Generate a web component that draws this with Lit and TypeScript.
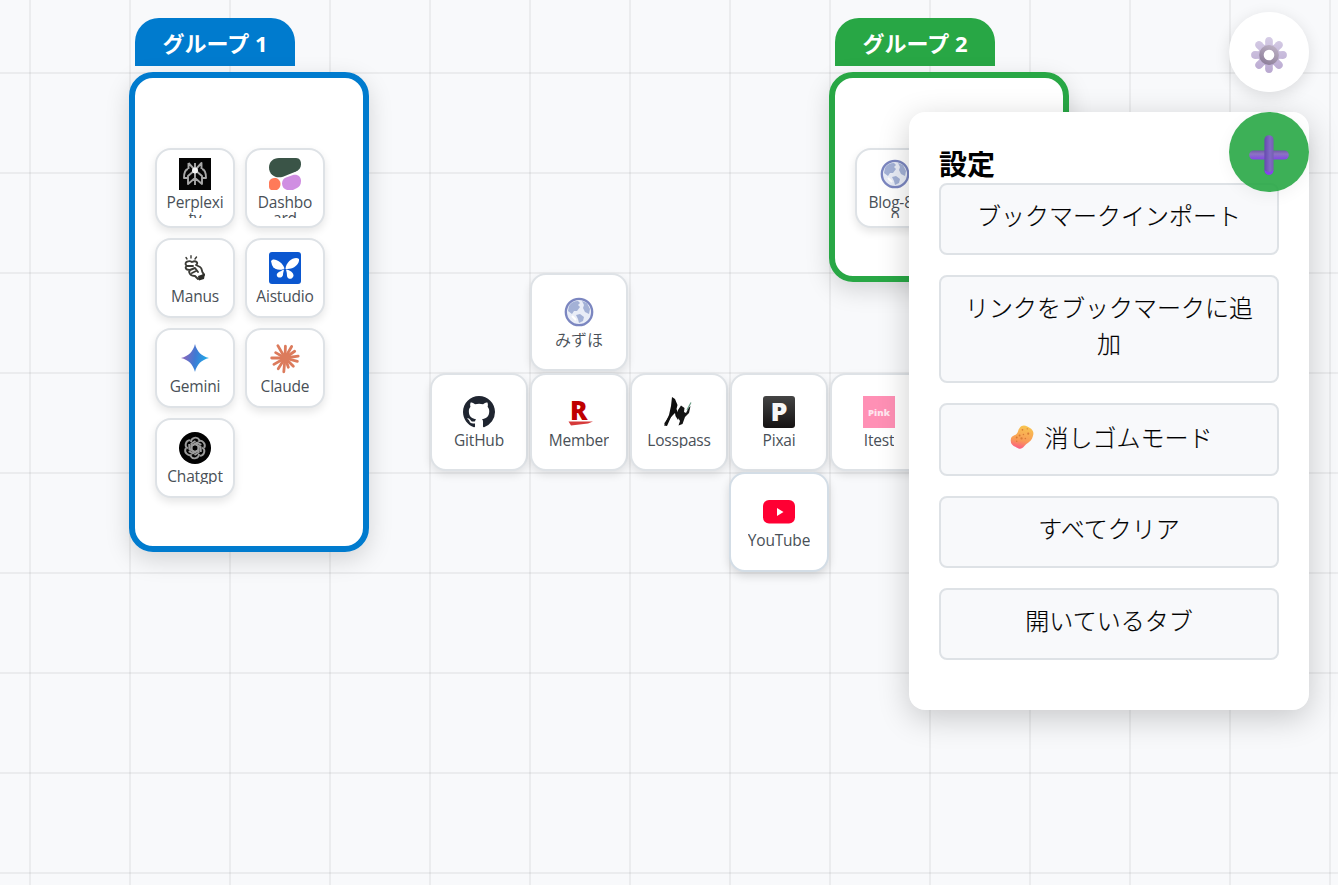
import { LitElement, html, svg, css } from "lit";
import { customElement, property } from "lit/decorators.js";

const globe = svg`
  <circle cx="16" cy="16" r="13.2" fill="#e9edf7" stroke="#7b86c0" stroke-width="2.3"/>
  <path d="M6 10 Q9 5 15 5 L17 7 L15 9 L17 11 L14 15 L11 15 L9 18 L5 15Z M19 5 L24 7 L27 13 L26 18 L22 16 L20 12 L21 9Z M13 19 L17 18 L21 21 L20 25 L16 27 L15 23Z" fill="#a3b1d6"/>
  <path d="M9 20 L13 24" stroke="#fff" stroke-width="2"/>`;

const claudeRays: [number, number][] = [
  [2, 13], [30, 14.5], [55, 13], [82, 14.5], [105, 14], [135, 13], [160, 11],
  [185, 15], [212, 14], [240, 14], [270, 14.5], [300, 12], [330, 15.5],
];
const petals = [0, 60, 120, 180, 240, 300];

const icons: Record<string, unknown> = {
  perplexity: svg`<rect width="32" height="32" fill="#050505"/>
    <g fill="none" stroke="#a8a8a8" stroke-width="1.9" stroke-linejoin="round">
      <path d="M16 5V27 M9.500 5L16 12L22.500 5V11 M9.500 5V11 M9 11Q5 12 5 20H9 M23 11Q27 12 27 20H23 M16 12L9 18V26L16 20L23 26V18L16 12"/>
    </g><circle cx="16" cy="12.500" r="3" fill="#f2f2f2"/>`,
  dashboard: svg`
    <path d="M10 0H27C31 0 32 3 32 6.500C32 10 30 12 27 13.500L14 18.700C7 21 0 17 0 9.500C0 4 4 0 10 0Z" fill="#3a5447"/>
    <path d="M0 24C1 19 11 18 11.500 26C11.500 29 10 31 8 32H2Q0 31 0 29Z" fill="#ff7a59"/>
    <path d="M17 19.500L24 17C29 16 32 19 32 23C32 27 30 29 28 30L24 32H18C15 31 13 29 13 25.500C13 22 15 20.500 17 19.500Z" fill="#d08ee2"/>`,
  manus: svg`<g fill="none" stroke="#3b3b36" stroke-width="1.900" stroke-linecap="round" stroke-linejoin="round">
      <path d="M7 13C5 10 10 8 13 10C17 8 20 11 17 13L21 15C24 17 22 19 24 21L25 23L19 27L16 24C11 24 9 20 11 18C6 18 6 15 8 14L14 14 M11 18L16 16L19 20 M13 21L17 19"/>
      <path d="M8 7L7 5.500 M12 6V3.800 M16 7L17.500 5" stroke-width="1.400"/></g>
    <path d="M19 24L26 21.500L25 27L20 28.500Z" fill="#2d2d29"/>`,
  aistudio: svg`<rect width="32" height="32" rx="3" fill="#0b57d0"/>
    <g fill="#fff"><path d="M2 9C4 5 13 9 15.500 16.500C12 19 5 18 3 13Z"/><path d="M16.500 17C17 9 26 4 30 7C31 12 24 18 16.500 17Z"/>
    <path d="M15 17.500C14.500 20 14 21 14 23C13.500 26 9 26.500 8 24C7 21 10 20 15 17.500Z"/><path d="M17 17.500C21 18 25 21 24.500 24C23 28 18.500 27.500 18 24Q18 21 17 17.500Z"/></g>`,
  gemini: svg`<defs><linearGradient id="gm" x1="0" y1=".4" x2="1" y2=".6"><stop offset=".1" stop-color="#8668bd"/><stop offset=".5" stop-color="#3e7ad4"/><stop offset=".9" stop-color="#22a6e6"/></linearGradient></defs>
    <path d="M16 2C17.800 9.500 22.500 14.200 30 16C22.500 17.800 17.800 22.500 16 30C14.200 22.500 9.500 17.800 2 16C9.500 14.200 14.200 9.500 16 2Z" fill="url(#gm)"/>`,
  claude: svg`<g stroke="#dc7b5c" stroke-width="2.800" stroke-linecap="round">
      ${claudeRays.map(([a, r]) => svg`<path d="M16 16V${17.2 - r}" transform="rotate(${a} 16 16)"/>`)}
    </g><circle cx="16" cy="16" r="4.500" fill="#dc7b5c"/>`,
  chatgpt: svg`<circle cx="16" cy="16" r="16" fill="#020202"/>
    <g fill="none" stroke="#9c9c9c" stroke-width="1.900">
      ${petals.map((a) => svg`<path d="M16 12L19.600 14V20.500L15.500 23 M12 10C12 5.500 18 4 20.500 8" transform="rotate(${a} 16 16)"/>`)}
    </g>`,
  github: svg`<path transform="scale(2)" fill="#1f2530" d="M8 0C3.580 0 0 3.580 0 8c0 3.540 2.290 6.530 5.470 7.590.4.070.55-.17.55-.38 0-.19-.01-.82-.01-1.490-2.010.37-2.530-.49-2.690-.94-.09-.23-.48-.94-.82-1.130-.28-.15-.68-.52-.01-.53.63-.01 1.080.58 1.230.82.72 1.210 1.870.87 2.330.66.07-.52.28-.87.51-1.070-1.780-.2-3.640-.89-3.640-3.950 0-.87.31-1.590.82-2.150-.08-.2-.36-1.020.08-2.120 0 0 .67-.21 2.200.82.64-.18 1.320-.27 2-.27s1.360.09 2 .27c1.530-1.040 2.200-.82 2.200-.82.44 1.100.16 1.920.08 2.120.51.56.82 1.270.82 2.150 0 3.070-1.870 3.750-3.650 3.950.29.25.54.73.54 1.480 0 1.070-.01 1.930-.01 2.200 0 .21.15.46.55.38A8.010 8.010 0 0 0 16 8c0-4.420-3.580-8-8-8z"/>`,
  rakuten: svg`<text x="7" y="23.500" font-family="Open Sans" font-weight="800" font-size="27" textLength="17.500" lengthAdjust="spacingAndGlyphs" fill="#bf0000">R</text>
    <path d="M5.500 25.500H30L25 27.500L8 29.500Z" fill="#d63a3a"/>`,
  losspass: svg`<path d="M9 1L12 3L14.500 9L13.500 13L16.500 20L15 24L12.500 20L12 17L8 21L4 30L1 29.500L6 19L8 10Z" fill="#0e0e0e"/>
    <path d="M2 28L9 18" stroke="#111" stroke-width="2"/>
    <path d="M15 14L18 9.500L21.500 12L21 16L23 17L25.500 12L27.500 10L26 17L22 21L19.500 28L15.500 29.500L17 25L14 20Z" fill="#141414"/>
    <path d="M24 14L28 6.500" stroke="#6b9d86" stroke-width="1.200"/>`,
  pixai: svg`<defs><linearGradient id="px" x2="0" y2="1"><stop stop-color="#444"/><stop offset="1" stop-color="#151212"/></linearGradient></defs>
    <rect width="32" height="32" rx="3" fill="url(#px)"/>
    <text x="7.500" y="24.500" font-family="Open Sans" font-weight="800" font-size="24" textLength="17" lengthAdjust="spacingAndGlyphs" fill="#f7f7f7">P</text>`,
  itest: svg`<rect width="32" height="32" fill="#ff90b5"/>
    <text x="5" y="19.500" font-family="Open Sans" font-weight="800" font-size="9.500" textLength="22" fill="#ffe6ef">Pink</text>`,
  youtube: svg`<rect y="4" width="32" height="23.500" rx="6" fill="#ff0033"/><path d="M14 12L20.500 16L14 20Z" fill="#fff"/>`,
  globe,
};

@customElement("link-tile")
class LinkTile extends LitElement {
  @property() icon = "";
  @property() label = "";
  static styles = css`
    :host {
      box-sizing: border-box; display: flex; flex-direction: column; align-items: center; justify-content: center;
      width: 80px; height: 80px; background: #fff; border: 2px solid #dee2e6; border-radius: 16px;
      box-shadow: 0 4px 8px rgba(0, 0, 0, 0.1);
    }
    :host(.free) { width: 98px; height: 98px; }
    :host(.active) { width: 100px; height: 100px; border-color: #d3dde6; box-shadow: 0 4px 10px rgba(0, 0, 0, 0.14); }
    svg { display: block; width: 32px; height: 32px; flex: none; overflow: visible; }
    .label {
      margin-top: 4px; max-height: 24px; overflow: hidden; white-space: pre; text-align: center;
      font: 15.5px/16px "Open Sans", "Noto Sans CJK JP", sans-serif; letter-spacing: -0.2px; color: #495057;
    }
    .label:lang(ja) { font: 350 16px/14px "Noto Sans CJK JP", sans-serif; letter-spacing: 0; padding-bottom: 2px; }
  `;
  render() {
    return html`<svg viewBox="0 0 32 32">${icons[this.icon]}</svg>
      <div class="label" lang=${/[^\x00-\x7f]/.test(this.label) ? "ja" : "en"}>${this.label}</div>`;
  }
}

const group1 = [
  ["perplexity", "Perplexi\nty"], ["dashboard", "Dashbo\nard"], ["manus", "Manus"], ["aistudio", "Aistudio"],
  ["gemini", "Gemini"], ["claude", "Claude"], ["chatgpt", "Chatgpt"],
];
const group2 = [["globe", "Blog-80\n0"]];
const freeTiles: [string, string, number, number][] = [
  ["globe", "みずほ", 530, 273], ["github", "GitHub", 430, 373], ["rakuten", "Member", 530, 373],
  ["losspass", "Losspass", 630, 373], ["pixai", "Pixai", 730, 373], ["itest", "Itest", 830, 373],
  ["youtube", "YouTube", 729, 472],
];

@customElement("app-root")
class AppRoot extends LitElement {
  static styles = css`
    :host {
      display: block; position: relative; width: 100%; height: 100vh; overflow: hidden;
      font-family: "Noto Sans", "Noto Sans CJK JP", sans-serif;
      background-color: #f8f9fb;
      background-image: linear-gradient(rgba(0, 0, 0, 0.05) 2px, transparent 2px),
        linear-gradient(90deg, rgba(0, 0, 0, 0.05) 2px, transparent 2px);
      background-size: 100px 100px; background-position: 29px 72px;
    }
    .node { position: absolute; }
    .group { --c: #007bce; top: 18px; width: 240px; }
    .group.green { --c: #28a745; }
    .tab {
      box-sizing: border-box; width: 160px; height: 48px; margin-left: 6px; border-radius: 24px 24px 0 0;
      background: var(--c); color: #fff; text-align: center; white-space: nowrap;
      font: 700 22px/50px "Noto Sans", "Noto Sans CJK JP", sans-serif;
    }
    .box {
      box-sizing: border-box; margin-top: 6px; border: 6px solid var(--c); border-radius: 24px;
      background: rgba(255, 255, 255, 0.98); box-shadow: 0 8px 24px rgba(0, 0, 0, 0.15);
      padding: 70px 20px 0; display: grid; grid-template-columns: 80px 80px; grid-auto-rows: 80px; gap: 10px;
    }
    .tall { height: 480px; }
    .short { height: 210px; }
    .panel {
      position: absolute; top: 112px; left: 909px; box-sizing: border-box; width: 400px; height: 598px;
      padding: 30px; background: #fff; border-radius: 16px; box-shadow: 0 8px 32px rgba(0, 0, 0, 0.2);
      display: flex; flex-direction: column;
    }
    h3 { margin: 0; height: 41px; font: 700 28px/43px "Noto Sans CJK JP", sans-serif; color: #000; }
    .list { display: flex; flex-direction: column; gap: 20px; }
    button {
      display: block; box-sizing: border-box; width: 100%; padding: 12px 24px 20px; margin: 0; border: 2px solid #dee2e6;
      border-radius: 8px; background: #f8f9fb; color: #000;
      font: 300 24px/36px "Noto Sans CJK JP", sans-serif; -webkit-text-stroke: 0.15px #000;
    }
    .erase { display: flex; justify-content: center; align-items: center; gap: 11px; padding: 14px 20px 19px 24px; }
    .erase svg { width: 24px; height: 26px; }
    .fab {
      position: absolute; left: 1229px; width: 80px; height: 80px; border-radius: 50%;
      display: flex; align-items: center; justify-content: center;
    }
    .gear { top: 12px; background: rgba(255, 255, 255, 0.96); box-shadow: 0 4px 16px rgba(0, 0, 0, 0.12); }
    .plus { top: 112px; background: rgba(40, 167, 69, 0.9); box-shadow: 0 4px 16px rgba(0, 0, 0, 0.05); }
    .fab svg { width: 42px; height: 42px; margin-top: 5px; }
  `;

  private tiles(items: string[][]) {
    return items.map(([i, l]) => html`<link-tile .icon=${i} .label=${l}></link-tile>`);
  }

  render() {
    return html`
      <section class="node group" style="left:129px">
        <div class="tab">グループ 1</div>
        <div class="box tall">${this.tiles(group1)}</div>
      </section>
      <section class="node group green" style="left:829px">
        <div class="tab">グループ 2</div>
        <div class="box short">${this.tiles(group2)}</div>
      </section>
      ${freeTiles.map(([i, l, x, y]) => html`<link-tile
        class="node free ${i === "youtube" ? "active" : ""}" style="left:${x}px;top:${y}px" .icon=${i} .label=${l}></link-tile>`)}
      <aside class="panel">
        <h3>設定</h3>
        <div class="list">
          <button>ブックマークインポート</button>
          <button>リンクをブックマークに追加</button>
          <button class="erase">
            <svg viewBox="0 0 25 27">
              <defs><linearGradient id="sp" x1=".6" y1="0" x2=".4" y2="1"><stop stop-color="#f8c650"/><stop offset=".65" stop-color="#f99a57"/><stop offset="1" stop-color="#fb5c83"/></linearGradient></defs>
              <path d="M10 4C13 0 17 1 22 5C26 9 24 12 23 15C21 19 17 20 15 23C12 27 9 26 6 24C2 22 0 20 1 15C2 12 5 12 7 10C9 8 8 6 10 4Z" fill="url(#sp)"/>
              <g fill="#d97b36"><circle cx="13" cy="6" r=".9"/><circle cx="18" cy="5" r=".7"/><circle cx="19" cy="10" r="1.100"/><circle cx="14" cy="11" r=".8"/><circle cx="10" cy="12" r="1"/><circle cx="7" cy="14" r="1"/><circle cx="12" cy="15" r="1.200"/><circle cx="16" cy="15" r=".8"/><circle cx="7" cy="18" r=".8"/></g>
            </svg>
            <span>消しゴムモード</span>
          </button>
          <button>すべてクリア</button>
          <button>開いているタブ</button>
        </div>
      </aside>
      <div class="fab gear">
        <svg viewBox="-21 -21 42 42">
          <defs>
            <linearGradient id="gt" gradientUnits="userSpaceOnUse" x1="0" y1="-18" x2="0" y2="18"><stop stop-color="#d6cde6"/><stop offset="1" stop-color="#b9a8d0"/></linearGradient>
            <linearGradient id="gr" gradientUnits="userSpaceOnUse" x1="6" y1="-9" x2="-3" y2="9"><stop stop-color="#bdb1c4"/><stop offset="1" stop-color="#8f819c"/></linearGradient>
            <mask id="teeth"><g fill="#fff">
              ${[0, 45, 90, 135, 180, 225, 270, 315].map((a) => svg`<path d="M-3.500 -7L-3.900 -14Q-3.600 -17.900 0 -17.900Q3.600 -17.900 3.900 -14L3.500 -7Z" transform="rotate(${a})"/>`)}
              <circle r="11"/></g>
            </mask>
          </defs>
          <rect x="-20" y="-20" width="40" height="40" fill="url(#gt)" mask="url(#teeth)"/>
          <circle r="7.600" fill="#fff" stroke="url(#gr)" stroke-width="4.600"/>
        </svg>
      </div>
      <div class="fab plus">
        <svg viewBox="-21 -21 42 42">
          <defs>
            <linearGradient id="ph" gradientUnits="userSpaceOnUse" x1="0" y1="-5" x2="0" y2="5"><stop stop-color="#6d56a4"/><stop offset=".4" stop-color="#8c74c2"/><stop offset="1" stop-color="#8440ea"/></linearGradient>
            <linearGradient id="pv" gradientUnits="userSpaceOnUse" x1="-5" y1="0" x2="5" y2="0"><stop stop-color="#6347ad"/><stop offset=".6" stop-color="#8269c5"/><stop offset="1" stop-color="#725eae"/></linearGradient>
          </defs>
          <rect x="-19.800" y="-4.600" width="39.600" height="9.200" rx="4.500" fill="url(#ph)"/>
          <rect x="-4.600" y="-19.800" width="9.200" height="39.600" rx="4.500" fill="url(#pv)"/>
          <path d="M-4.500 15Q-4 19.800 0 19.800Q4 19.800 4.500 15Q0 19 -4.500 15Z" fill="#8840f0"/>
        </svg>
      </div>
    `;
  }
}
